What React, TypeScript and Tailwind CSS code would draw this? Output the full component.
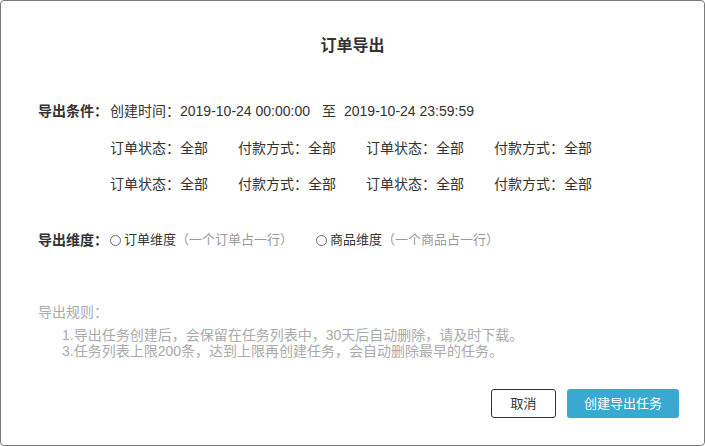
import type { JSX } from "react";

const font = "[font-family:'Liberation_Sans','Noto_Sans_CJK_SC',sans-serif]";

const filters = [
  ["订单状态", "全部"],
  ["付款方式", "全部"],
  ["订单状态", "全部"],
  ["付款方式", "全部"],
];

const Radio = ({ label, hint }: { label: string; hint: string }) => (
  <label className="flex items-center">
    <span className="w-[11px] h-[11px] rounded-full border border-[#6b6b6b] bg-white mr-[3px]" />
    <span className="text-[#333]">{label}</span>
    <span className="text-[#999]">（一个{hint}占一行）</span>
  </label>
);

const App = (): JSX.Element => {
  return (
    <div className={`w-[705px] h-[446px] bg-white ${font}`}>
      <div className="w-full h-full border border-[#7a7a7a] rounded-[4px] flex flex-col px-[37px]">
        <h2 className="mt-[33px] h-6 leading-6 text-center text-[16px] font-bold text-[#333]">
          订单导出
        </h2>

        <div className="mt-[43px] flex h-5 items-center text-[14px] text-[#333]">
          <span className="w-[72px] font-bold">导出条件：</span>
          <span>创建时间：</span>
          <span>2019-10-24 00:00:00</span>
          <span className="ml-3 mr-[8px]">至</span>
          <span>2019-10-24 23:59:59</span>
        </div>

        {[0, 1].map((r) => (
          <div
            key={r}
            className={`${r === 0 ? "mt-[17px]" : "mt-4"} flex h-5 items-center pl-[72px] text-[14px] text-[#333]`}
          >
            {filters.map(([k, v], i) => (
              <span key={i} className="w-[128px] whitespace-nowrap">
                {k}：{v}
              </span>
            ))}
          </div>
        ))}

        <div className="mt-9 flex h-5 items-center text-[13px]">
          <span className="w-[72px] font-bold text-[14px] text-[#333]">导出维度：</span>
          <div className="flex items-center gap-[23px]">
            <Radio label="订单维度" hint="订单" />
            <Radio label="商品维度" hint="商品" />
          </div>
        </div>

        <div className="mt-[52px] h-5 leading-5 text-[14px] text-[#aaa]">导出规则：</div>
        <div className="mt-[5px] pl-6 text-[14px] leading-4 text-[#aaa]">
          <p>1.导出任务创建后，会保留在任务列表中，30天后自动删除，请及时下载。</p>
          <p>3.任务列表上限200条，达到上限再创建任务，会自动删除最早的任务。</p>
        </div>

        <div className="mt-[30px] flex justify-end gap-[11px] -mr-3 text-[13px]">
          <button className="w-[65px] h-[29px] rounded-[3px] border border-[#333] bg-white text-[#333]">
            取消
          </button>
          <button className="w-[112px] h-[29px] rounded-[3px] bg-[#38a9d1] text-white">
            创建导出任务
          </button>
        </div>
      </div>
    </div>
  );
};

export default App;
